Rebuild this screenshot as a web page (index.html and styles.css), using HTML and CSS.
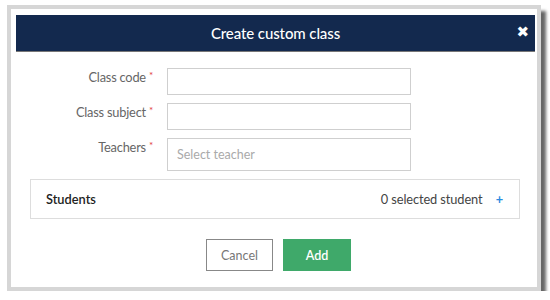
FILE: index.html
```html
<!DOCTYPE html>
<html>
<head>
<meta charset="utf-8">
<link rel="stylesheet" href="styles.css">
</head>
<body>
<div class="frame">
  <div class="modal">
    <div class="header">
      <span class="title">Create custom class</span>
      <span class="close">✖</span>
    </div>
    <div class="form">
      <label class="label">Class code<span class="req">*</span></label>
      <div class="input"></div>
      <label class="label">Class subject<span class="req">*</span></label>
      <div class="input"></div>
      <label class="label">Teachers<span class="req">*</span></label>
      <div class="input select">Select teacher</div>
    </div>
    <div class="students">
      <span class="students-title">Students</span>
      <span class="students-count">0 selected student <span class="plus">+</span></span>
    </div>
    <div class="actions">
      <button class="btn cancel">Cancel</button>
      <button class="btn add">Add</button>
    </div>
  </div>
</div>
</body>
</html>
```
FILE: styles.css
```css
html, body {
  margin: 0;
  padding: 0;
  background: #fff;
  font-family: Lato, "Open Sans", sans-serif;
}
.frame {
  margin: 5px 0 0 7px;
  width: 534px;
  height: 286px;
  box-sizing: border-box;
  border: 4px solid #d6d6d6;
  background: #fff;
  padding: 6px 2px 0 5px;
  box-shadow: 5px 6px 3px rgba(0,0,0,0.6);
}
.modal {
  width: 519px;
}
.header {
  height: 36px;
  background: #13294e;
  border-bottom: 1px solid #777;
  display: flex;
  align-items: center;
  justify-content: center;
  position: relative;
}
.title {
  color: #fff;
  font-size: 15px;
  font-weight: 500;
  letter-spacing: -0.1px;
}
.close {
  position: absolute;
  right: 6px;
  top: 9px;
  color: #fff;
  font-size: 15px;
  line-height: 17px;
  font-weight: bold;
  font-family: "DejaVu Sans", sans-serif;
}
.form {
  display: grid;
  grid-template-columns: 137px 244px;
  column-gap: 14px;
  row-gap: 8px;
  margin-top: 16px;
}
.label {
  text-align: right;
  font-size: 12.8px;
  color: #666;
  padding-top: 1px;
  letter-spacing: -0.2px;
}
.req {
  color: #e23b3b;
  font-size: 10px;
  vertical-align: 3px;
  margin-left: 3px;
}
.input {
  height: 27px;
  border: 1px solid #cfcfcf;
  box-sizing: border-box;
  background: #fff;
}
.select {
  height: 33px;
  color: #aaa;
  font-size: 12.5px;
  padding: 8px 0 0 9px;
}
.students {
  margin: 8px 15px 0 14px;
  height: 40px;
  border: 1px solid #ddd;
  box-sizing: border-box;
  display: flex;
  align-items: center;
  justify-content: space-between;
  padding: 0 16px 0 15px;
}
.students-title {
  font-size: 12.8px;
  font-weight: 600;
  color: #222;
}
.students-count {
  font-size: 12.8px;
  color: #444;
  letter-spacing: -0.1px;
}
.plus {
  color: #2a8be0;
  font-weight: bold;
  margin-left: 10px;
}
.actions {
  display: flex;
  justify-content: center;
  gap: 10px;
  margin-top: 20px;
  padding-left: 6px;
}
.btn {
  height: 32px;
  font-family: Lato, sans-serif;
  font-size: 12.5px;
  box-sizing: border-box;
  border-radius: 0;
}
.cancel {
  width: 67px;
  background: #fff;
  border: 1px solid #888;
  color: #777;
}
.add {
  width: 68px;
  background: #3fa96a;
  border: 1px solid #3fa96a;
  color: #fff;
  font-weight: 600;
}
```
